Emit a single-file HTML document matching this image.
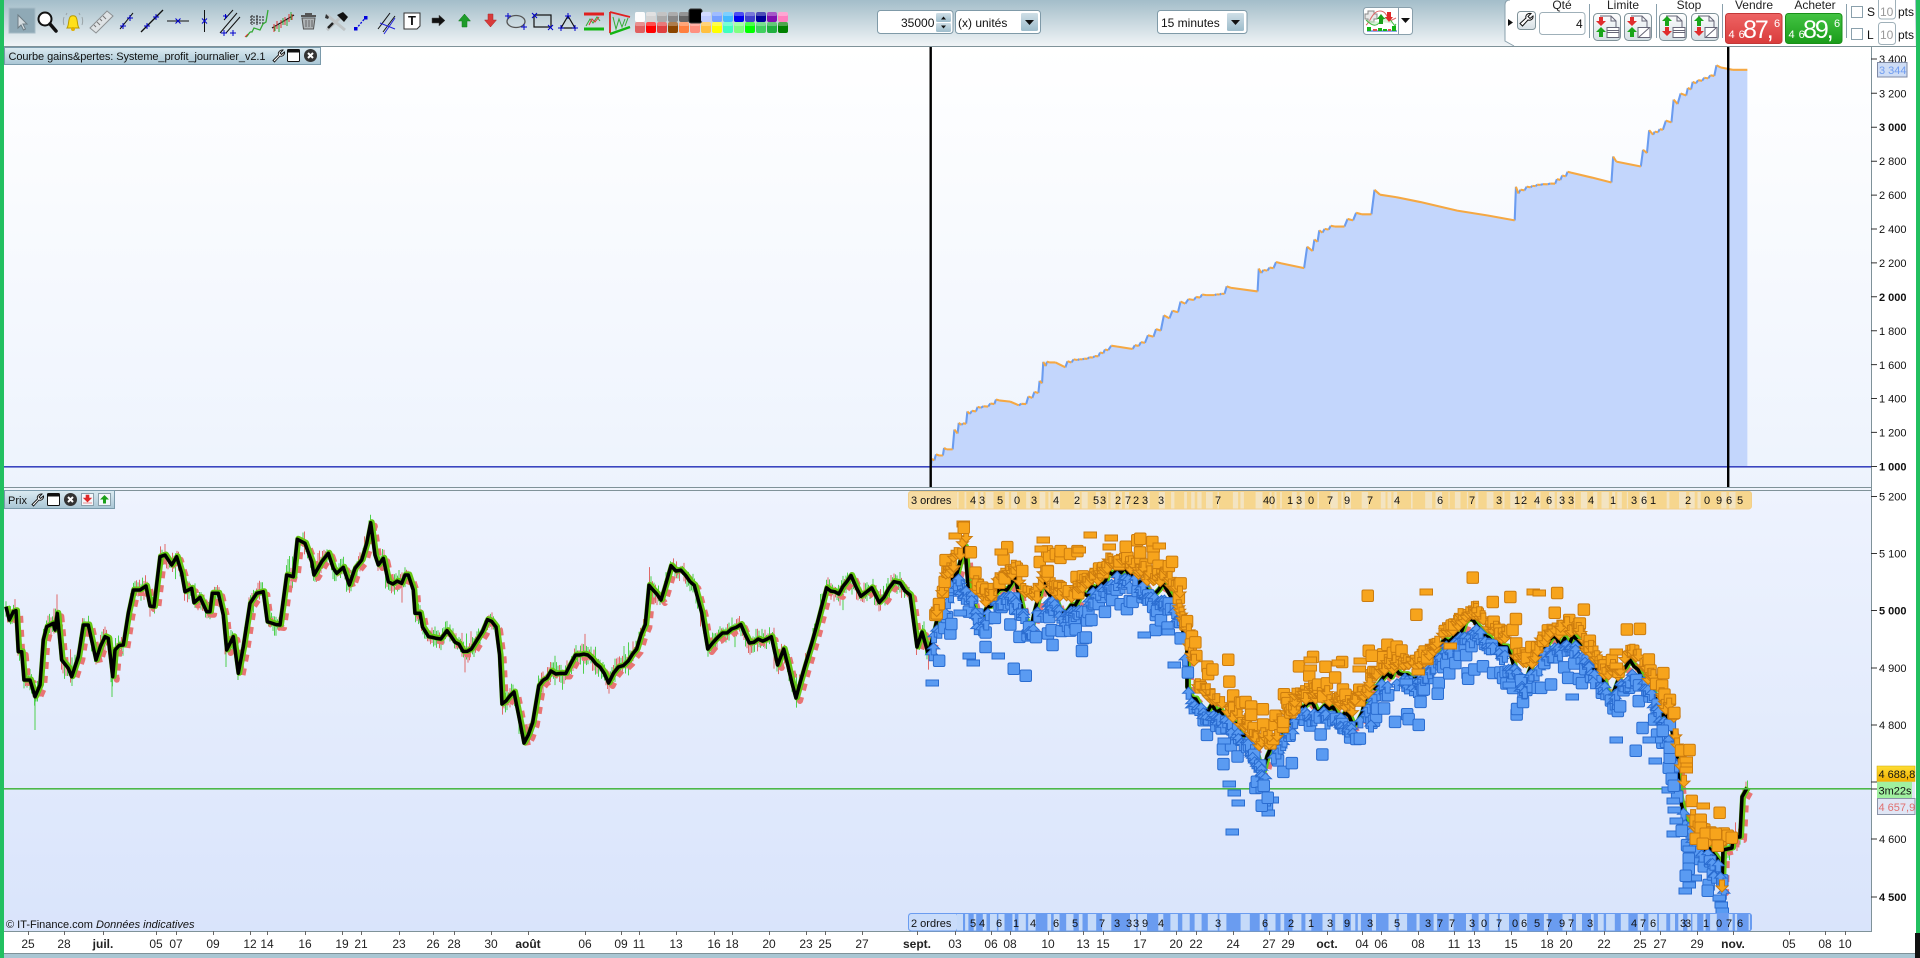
<!DOCTYPE html>
<html lang="fr"><head><meta charset="utf-8"><title>Courbe gains</title>
<style>
html,body{margin:0;padding:0;width:1920px;height:958px;overflow:hidden;background:#fff}
svg{display:block;position:absolute;left:0;top:0}
text{font-family:"Liberation Sans",sans-serif;font-size:11px;fill:#111}
.b{font-weight:bold}
.m{text-anchor:middle}
.ax text{font-size:11px}
.d text{font-size:11px;text-anchor:middle}
.lbl text{font-size:12px;text-anchor:middle;fill:#222}
</style></head><body>
<svg width="1920" height="958" viewBox="0 0 1920 958" xmlns="http://www.w3.org/2000/svg">
<defs>
<linearGradient id="tb" x1="0" y1="0" x2="0" y2="1"><stop offset="0" stop-color="#a3bdc9"/><stop offset="1" stop-color="#f0f4f6"/></linearGradient>
<linearGradient id="p1" x1="0" y1="0" x2="0" y2="1"><stop offset="0" stop-color="#ffffff"/><stop offset="1" stop-color="#edf3fd"/></linearGradient>
<linearGradient id="p2" x1="0" y1="0" x2="0" y2="1"><stop offset="0" stop-color="#eef3fe"/><stop offset="1" stop-color="#d9e4fb"/></linearGradient>
<linearGradient id="tt" x1="0" y1="0" x2="0" y2="1"><stop offset="0" stop-color="#dcebf2"/><stop offset="1" stop-color="#a9c6d5"/></linearGradient>
<linearGradient id="btn" x1="0" y1="0" x2="0" y2="1"><stop offset="0" stop-color="#ffffff"/><stop offset="1" stop-color="#d5dfe4"/></linearGradient>
<linearGradient id="drop" x1="0" y1="0" x2="0" y2="1"><stop offset="0" stop-color="#cfdfe7"/><stop offset="1" stop-color="#9dbccb"/></linearGradient>
<linearGradient id="red" x1="0" y1="0" x2="0" y2="1"><stop offset="0" stop-color="#ee6464"/><stop offset="1" stop-color="#d93c3c"/></linearGradient>
<linearGradient id="grn" x1="0" y1="0" x2="0" y2="1"><stop offset="0" stop-color="#43c443"/><stop offset="1" stop-color="#1a9c1a"/></linearGradient>
<linearGradient id="gold" x1="0" y1="0" x2="0" y2="1"><stop offset="0" stop-color="#ffdd33"/><stop offset="1" stop-color="#f0b000"/></linearGradient>
</defs>

<!-- toolbar -->
<rect x="0" y="0" width="1920" height="46" fill="url(#tb)"/>
<rect x="0" y="46" width="1920" height="1" fill="#7f9299"/>
<rect x="9" y="8" width="26" height="25" fill="#8fa9b6" stroke="#a6bcc7"/>
<path d="M18 15l0 13 3-3 2.500 5 2-1-2.500-5 4 0z" fill="#d5dde1" stroke="#6d7c84"/>
<circle cx="45" cy="19" r="6.500" fill="#fff" stroke="#111" stroke-width="2"/><path d="M50 24l6 7" stroke="#111" stroke-width="3.500" stroke-linecap="round"/>
<path d="M67 28c2-3 1-6 2.500-10 1-3 6-3 7 0 1.500 4 .5 7 2.500 10z" fill="#ffe01a" stroke="#b89a00"/><circle cx="73" cy="29" r="2" fill="#e0b000"/><path d="M64 17c-1 3-1 5 0 8M82 17c1 3 1 5 0 8M67 13l-1 2M79 13l1 2" stroke="#9aa4a8" fill="none"/>
<path d="M90 28l17-17 6 5-17 17z" fill="#dfe3e5" stroke="#8b8f91"/><path d="M94 25l2 2M97 22l3 3M100 19l2 2M103 16l3 3" stroke="#777"/>
<path d="M120 29L133 13M141 37" stroke="#111" fill="none"/><path d="M120 26h6M123 23v6M127 18h6M130 15v6" stroke="#00c" fill="none"/>
<path d="M141 32L163 10" stroke="#111" stroke-width="1.300"/><path d="M144 26h6M147 23v6M153 17h6M156 14v6" stroke="#00c" fill="none"/>
<path d="M167 21h22" stroke="#111"/><path d="M175.500 18.500l5 5M180.500 18.500l-5 5" stroke="#00c"/>
<path d="M204.500 10v22" stroke="#111"/><path d="M202 18.500l5 5M207 18.500l-5 5" stroke="#00c"/>
<path d="M220 33l17-20M226 33l14-16M224 20l9-10" stroke="#111" fill="none"/><path d="M221 35h6M224 32v6M230 35h6M233 32v6M223 18h5M225.500 16v5" stroke="#00c" fill="none" transform="translate(0,-2)"/>
<path d="M250 17h14M250 20h14M250 23h14M252 15v10M257 15v10" stroke="#222" fill="none" stroke-dasharray="2 1"/><path d="M246 37c3-2 3-6 6-5l2-4 6 2 3-6 3-2 2-12" stroke="#33aa33" fill="none" stroke-width="1.300"/><path d="M245 37l3-3" stroke="#d33"/>
<path d="M272 28l22-13" stroke="#111" stroke-width="1.300"/><path d="M274 24v8M277 21v8M281 20v8M285 17v8M289 14v8M292 14v6" stroke="#d33"/><path d="M275 26v5M279 25v7M283 18v7M287 20v6M291 12v8" stroke="#3a3"/>
<path d="M302 18h13l-1.500 11h-10z" fill="#aeb3b5" stroke="#555"/><path d="M301 16h15M305 14h7" stroke="#555" stroke-width="2"/><path d="M306 20v7M309 20v7M312 20v7" stroke="#666"/>
<path d="M327 15l18 15M343 15l-16 15" stroke="#bfc4c6" stroke-width="3"/><path d="M337 15l6-3 5 5-4 5z" fill="#111"/><path d="M326 14l3 3-1 2-3-1z" fill="#333"/><path d="M328 28l5-5" stroke="#222" stroke-width="2.500"/>
<path d="M356 29l10-12" stroke="#00d" stroke-dasharray="2 1.500" stroke-width="1.300"/><rect x="354" y="27" width="3.500" height="3.500" fill="#00d"/><rect x="364" y="16" width="3.500" height="3.500" fill="#00d"/>
<path d="M378 29l12-16M383 32l12-16" stroke="#111" fill="none"/><path d="M380 23l15 6M384 34l11-16" stroke="#22d" fill="none"/>
<path d="M404 13h16v13l-3 3h-13z" fill="#fff" stroke="#333"/><text x="408" y="25" class="b" style="font-size:13px">T</text>
<path d="M432 18h7v-3l6 5.500-6 5.500v-3h-7z" fill="#111" stroke="#555" stroke-width=".5"/>
<path d="M464.500 14l6 7h-3.500v6h-5v-6h-3.500z" fill="#1d9b2a" stroke="#127a1c" stroke-width=".5"/>
<path d="M488 14h5v6h3.500l-6 7-6-7h3.500z" fill="#d83a3a" stroke="#a82a2a" stroke-width=".5"/>
<ellipse cx="516" cy="21.500" rx="9" ry="6" fill="none" stroke="#555" stroke-width="1.300"/><path d="M505 16h6M508 13v6M521 27h6M524 24v6" stroke="#00c" fill="none"/>
<rect x="534" y="15" width="17" height="12" fill="none" stroke="#111" stroke-width="1.200"/><path d="M532 13l5 5M537 13l-5 5M548 25l5 5M553 25l-5 5" stroke="#00c"/>
<path d="M568 16l7 12h-14z" fill="none" stroke="#111" stroke-width="1.200"/><path d="M565 16h6M568 13v6M558 28h6M561 25v6M572 28h6M575 25v6" stroke="#00c" fill="none"/>
<path d="M584 14h20" stroke="#e02020" stroke-width="3"/><path d="M584 29h20" stroke="#12b512" stroke-width="3"/><path d="M586 26l4-7 3 4 4-6 3 4" stroke="#3a3" fill="none"/><path d="M589 25l3-6 3 3 4-5" stroke="#d33" fill="none"/>
<path d="M610 12l20 5M610 12v21" stroke="#e02020" stroke-width="1.800" fill="none"/><path d="M610 34l20-7" stroke="#12b512" stroke-width="2.500"/><path d="M613 17l3 12 3-10 3 8 3-8M628 18l-3 8" stroke="#3a3" fill="none"/>

<g id="pal"></g>

<!-- numeric inputs -->
<rect x="877.500" y="10.500" width="75.500" height="23" rx="3" fill="#fff" stroke="#7f9aa8"/>
<text x="901" y="27" style="font-size:12px">35000</text>
<rect x="936" y="13" width="15" height="9" rx="1.500" fill="url(#drop)"/><rect x="936" y="23" width="15" height="9" rx="1.500" fill="url(#drop)"/>
<path d="M941 19.500l2.500-3 2.500 3zM941 25.500l2.500 3 2.500-3z" fill="#111"/>
<rect x="955.500" y="10.500" width="85" height="23" rx="3" fill="#fff" stroke="#7f9aa8"/>
<text x="958" y="27" style="font-size:12px">(x) unités</text>
<rect x="1021" y="13" width="17" height="18" rx="1.500" fill="url(#drop)"/><path d="M1025 20h9l-4.500 5z" fill="#111"/>
<rect x="1157.500" y="10.500" width="89.500" height="23" rx="3" fill="#fff" stroke="#7f9aa8"/>
<text x="1161" y="27" style="font-size:12px">15 minutes</text>
<rect x="1227" y="13" width="17" height="18" rx="1.500" fill="url(#drop)"/><path d="M1231 20h9l-4.500 5z" fill="#111"/>

<!-- chart type button -->
<rect x="1363.500" y="7.500" width="49" height="27" rx="3" fill="#fff" stroke="#8aa0ac"/>
<path d="M1398.500 8v26" stroke="#8aa0ac"/><path d="M1401 18h9l-4.500 5z" fill="#111"/>
<path d="M1368 11h6v3h3v5h-3v3h-6v-3h-3v-5h3z" fill="#e8e8e8" stroke="#888"/>
<path d="M1366 25c4-2 6-14 14-14s7 11 12 9l4-2" stroke="#d66" fill="none"/><path d="M1366 20c6 6 10 7 14 2s8-6 12 0 3 3 4 2" stroke="#4b4" fill="#bfeabf" fill-opacity=".6"/>
<path d="M1377 19l4-5 4 5h-2v5h-4v-5z" fill="#1aa01a"/><path d="M1387 12h4v5h2l-4 5-4-5h2z" fill="#e02828"/>
<path d="M1367 31h30" stroke="#2255cc"/><rect x="1367" y="27" width="4" height="4" fill="#12b512"/><rect x="1373" y="29" width="4" height="2" fill="#e05050"/><rect x="1378" y="28" width="4" height="3" fill="#12b512"/><rect x="1383" y="29" width="4" height="2" fill="#12b512"/><rect x="1388" y="29" width="3" height="2" fill="#e05050"/><rect x="1392" y="26" width="4" height="5" fill="#12b512"/>

<!-- right order panel -->
<path d="M1505 5q0-5 5-5H1915V46H1514l-9-5z" fill="#fff"/>
<path d="M1510 0q-5 0-5 5v36l9 5" fill="none" stroke="#8aa0ac"/>
<path d="M1508 19l5 3.500-5 3.500z" fill="#111"/>
<rect x="1517.500" y="11.500" width="18" height="18" rx="3" fill="url(#btn)" stroke="#7f9299"/>
<path d="M1531 13.500l-3 3 2 2 3-2.500c.5 2.500-2 5-5 4l-5.500 6-2.500-2.500 6-5.500c-1-3 2-5 5-4.500z" fill="#fff" stroke="#111"/>
<g class="lbl"><text x="1562" y="9">Qté</text><text x="1623" y="9">Limite</text><text x="1689" y="9">Stop</text><text x="1754" y="9">Vendre</text><text x="1815" y="9">Acheter</text></g>
<rect x="1539.500" y="12.500" width="45.500" height="22" rx="3" fill="#fff" stroke="#9fb0b9"/>
<text x="1576" y="28" style="font-size:12px">4</text>
<path d="M1589.500 4v34M1656.500 4v34M1722.500 4v34M1846.500 4v34" stroke="#8aa0ac"/>
<g stroke="#7f9299">
<rect x="1593.500" y="13.500" width="27" height="27" rx="4" fill="url(#btn)"/><rect x="1624.500" y="13.500" width="27" height="27" rx="4" fill="url(#btn)"/>
<rect x="1659.500" y="13.500" width="27" height="27" rx="4" fill="url(#btn)"/><rect x="1691.500" y="13.500" width="27" height="27" rx="4" fill="url(#btn)"/>
</g>
<g fill="none" stroke="#667">
<path d="M1600 16h11l5 5v7M1631 16h11l5 5v7M1666 16h11l5 5v7M1698 16h11l5 5v7"/><path d="M1611 16v5h5M1642 16v5h5M1677 16v5h5M1709 16v5h5"/>
</g>
<g fill="#fff" stroke="#667">
<rect x="1607" y="27.500" width="12" height="10"/><rect x="1638" y="27.500" width="12" height="10"/><rect x="1673" y="27.500" width="12" height="10"/><rect x="1705" y="27.500" width="12" height="10"/>
</g>
<path d="M1607 32.500h12M1673 32.500h12M1607 30.500h12M1673 30.500h12" stroke="#667" fill="none"/>
<path d="M1639 37l10-9M1706 37l10-9" stroke="#667"/>
<g fill="#e02d2d"><path d="M1599 17h4v4h3l-5 5-5-5h3z"/><path d="M1630 17h4v4h3l-5 5-5-5h3z"/><path d="M1665 27h4v4h3l-5 5-5-5h3z"/><path d="M1697 27h4v4h3l-5 5-5-5h3z"/></g>
<g fill="#1aa51a"><path d="M1601 27l5 5h-3v5h-4v-5h-3z"/><path d="M1632 27l5 5h-3v5h-4v-5h-3z"/><path d="M1667 16l5 5h-3v5h-4v-5h-3z"/><path d="M1699 16l5 5h-3v5h-4v-5h-3z"/></g>
<rect x="1725.500" y="13.500" width="56.500" height="30" rx="3" fill="url(#red)" stroke="#c23838"/>
<rect x="1785.500" y="13.500" width="56.500" height="30" rx="3" fill="url(#grn)" stroke="#199019"/>
<g>
<text x="1728.500" y="38" style="fill:#fff;font-size:11px;letter-spacing:.5px">4 6</text><text x="1743" y="38" style="fill:#fff;font-size:25px;letter-spacing:-2px">87,</text><text x="1774" y="27" style="fill:#fff;font-size:11px">6</text>
<text x="1788.500" y="38" style="fill:#fff;font-size:11px;letter-spacing:.5px">4 6</text><text x="1803" y="38" style="fill:#fff;font-size:25px;letter-spacing:-2px">89,</text><text x="1834" y="27" style="fill:#fff;font-size:11px">6</text>
</g>
<rect x="1851.500" y="6.500" width="11" height="11" fill="#fff" stroke="#8aa0ac"/><rect x="1851.500" y="28.500" width="11" height="11" fill="#fff" stroke="#8aa0ac"/>
<text x="1867" y="16" style="font-size:12px">S</text><text x="1867" y="39" style="font-size:12px">L</text>
<rect x="1878.500" y="-3" width="17" height="22" rx="3" fill="#fff" stroke="#9fb0b9"/><rect x="1878.500" y="22.500" width="17" height="22" rx="3" fill="#fff" stroke="#9fb0b9"/>
<text x="1880" y="16" style="font-size:12px;fill:#999">10</text><text x="1880" y="39" style="font-size:12px;fill:#999">10</text>
<text x="1898" y="16" style="font-size:12px">pts</text><text x="1898" y="39" style="font-size:12px">pts</text>

<!-- panes -->
<rect x="4" y="47" width="1867" height="440" fill="url(#p1)"/>
<rect x="4" y="488" width="1867" height="2" fill="#f0f4fc"/>
<rect x="4" y="491" width="1867" height="440" fill="url(#p2)"/>
<rect x="1872" y="47" width="43" height="885" fill="#fff"/>
<rect x="4" y="932" width="1911" height="21" fill="#fff"/>
<rect x="4" y="487" width="1868" height="1" fill="#7f9299"/>
<rect x="4" y="490" width="1868" height="1" fill="#7f9299"/>
<rect x="4" y="931" width="1868" height="1" fill="#7f9299"/>
<rect x="1871" y="47" width="1" height="885" fill="#7f9299"/>
<rect x="0" y="953" width="1920" height="1" fill="#7f9299"/>
<rect x="0" y="954" width="1920" height="4" fill="#a9c6d3"/>
<rect x="0" y="0" width="4" height="958" fill="#22c060"/>
<rect x="1916" y="0" width="4" height="933" fill="#22c060"/>
<rect x="1915" y="933" width="5" height="25" fill="#111"/>

<!-- equity -->
<g transform="scale(1.2245)">
<path id="eqf" fill="#c3d6fc"/>
<path id="eq" d="M760 381L763 376L767 372L770 372L773 367L778 367L782 354L785 347L789 346L792 338L797 336L801 333L807 332L812 330L816 327L825 328L832 331L838 330L843 325L848 321L851 313L854 299L857 296L862 296L870 300L875 296L880 294L888 293L897 291L905 286L912 283L925 285L935 280L942 275L948 270L955 260L962 255L968 248L975 245L985 241L992 241L1000 240L1005 235L1027 238L1030 223L1040 219L1046 215L1065 219L1072 205L1080 190L1090 185L1098 185L1105 180L1112 175L1120 175L1127 159L1140 161L1160 165L1190 172L1215 176L1237 180L1240 158L1250 153L1258 151L1270 150L1283 141L1300 145L1316 149L1320 132L1340 136L1345 125L1350 110L1358 106L1365 100L1370 85L1377 78L1385 68L1395 64L1400 62L1405 55L1415 57L1427 57" fill="none" stroke="#6a9cf0" stroke-width="1.700"/>
<path id="eqo" fill="none" stroke="#f5a843" stroke-width="1.700"/>
</g>
<rect x="4" y="466" width="1867" height="1.600" fill="#3a45c0"/>
<rect x="929.500" y="47" width="2.400" height="440" fill="#000"/>
<rect x="1727" y="47" width="2.400" height="440" fill="#000"/>

<!-- price noise + line -->
<g id="noise"></g>
<g fill="none" stroke-linejoin="round">
<path id="pl2" transform="translate(4,3)" stroke="#e87474" stroke-width="6" stroke-dasharray="7 7"/>
<path id="pl3" transform="translate(1,-.5)" stroke="#66c814" stroke-width="6"/>
<path id="pl" stroke="#000" stroke-width="3.500" d="M6 606.700L9.300 620L13.300 611.700L16 610.700L18.300 651.700L21.700 651.700L24 680L30 680L35 696.700L40 685L43.300 640L46.700 626.700L53.300 623.300L55 630L57.300 613.300L61.700 660L68.300 668.300L71.700 676.700L78.300 656.700L83.300 625L88.300 625L96 660L105 636.700L108.300 638.300L112.700 676.700L115 650L123.300 645L128.300 613.300L133.300 590L140 590L146 586L150 606L154 606.700L160 556.700L165 555L171.700 565L176.700 556.700L181.700 573.300L185 591.700L191.700 588.300L194 602.700L200 597.300L206.700 611.700L210 611.700L212.300 593.300L218.300 593.300L223.300 615L226.700 650L233.300 636.700L238.300 673.300L243.300 646.700L250 603.300L256.700 593.300L263.300 591.700L267.300 621.700L280 625L286.700 575L293.300 576.700L297.300 539.300L305 543.300L311.700 561.700L314 575L321.700 561.700L328.300 553.300L333.300 568.300L336.700 573.300L343.300 567.300L349.300 585L355 568.300L361.700 560L366.700 543.300L370.700 522.700L375 555L378.300 565L383.300 558.300L388.300 581.700L401.700 583.300L405 575L408.300 575L413.300 590L415 613.300L420 613.300L422.500 627L428.600 636.700L440.800 639L447 630.600L463 651.400L471.400 649L477.600 639L487.400 619.600L496 627L499.600 655L502 704L514 692L524 743L532.700 722.400L538.800 685.700L551 671L565.700 673.500L575.500 655L587.800 655L600 667L608.600 683L618.400 667L628.200 661L636.700 649L645.300 624.500L649 585.300L661 600L671 565.700L685.700 575.500L694.300 585.300L701.600 612.300L707.800 649L722.500 633L740.800 624.500L749.400 643L771.400 636.700L777.600 665L783.700 649L796 698L804.500 667.400L811.800 643L826.500 587.800L838.800 594L851 575.500L860.800 596.300L871.800 587.800L879.200 602.500L893.900 581.600L900 583L910 595L917 647L922 632L928 653L933 637L943 587L957 573L965 547L968 587L977 620L987 607L1015 577L1023 613L1030 633L1043 580L1063 613L1083 593L1100 583L1117 570L1133 575L1150 595L1163 583L1177 613L1187 647L1187 687L1200 707L1220 710L1233 723L1245 735L1255 750L1262 775L1272 745L1285 722L1300 707L1308 703L1317 713L1333 707L1357 723L1367 693L1395 668L1415 680L1440 647L1473 620L1493 643L1507 647L1520 683L1527 677L1548 643L1577 640L1592 670L1612 697L1630 660L1650 687L1660 715L1667 715L1677 757L1680 798L1685 820L1700 852L1712 852L1718 860L1722 890L1723 850L1732 848L1733 837L1740 837L1742 797L1747 788"/>
</g>
<rect x="4" y="788" width="1867" height="1.600" fill="#4cb848"/>
<g id="marks"></g>

<!-- order bars -->
<g id="bars"></g>
<rect x="908.500" y="491.500" width="843" height="17.500" rx="3" fill="none" stroke="#f3cf8a"/>
<rect x="908.500" y="913.500" width="843" height="17.500" rx="3" fill="none" stroke="#6a9cf0"/>
<text x="911" y="504">3 ordres</text>
<text x="911" y="927">2 ordres</text>
<g class="d">
<text x="973" y="504">4</text><text x="982" y="504">3</text><text x="1000" y="504">5</text><text x="1017" y="504">0</text><text x="1034" y="504">3</text><text x="1056" y="504">4</text><text x="1077" y="504">2</text><text x="1096" y="504">5</text><text x="1103" y="504">3</text><text x="1118" y="504">2</text><text x="1128" y="504">7</text><text x="1136" y="504">2</text><text x="1145" y="504">3</text><text x="1161" y="504">3</text><text x="1218" y="504">7</text><text x="1266" y="504">4</text><text x="1272" y="504">0</text><text x="1290" y="504">1</text><text x="1299" y="504">3</text><text x="1311" y="504">0</text><text x="1330" y="504">7</text><text x="1347" y="504">9</text><text x="1370" y="504">7</text><text x="1397" y="504">4</text><text x="1440" y="504">6</text><text x="1472" y="504">7</text><text x="1499" y="504">3</text><text x="1517" y="504">1</text><text x="1524" y="504">2</text><text x="1537" y="504">4</text><text x="1549" y="504">6</text><text x="1562" y="504">3</text><text x="1571" y="504">3</text><text x="1591" y="504">4</text><text x="1613" y="504">1</text><text x="1634" y="504">3</text><text x="1644" y="504">6</text><text x="1653" y="504">1</text><text x="1688" y="504">2</text><text x="1707" y="504">0</text><text x="1719" y="504">9</text><text x="1729" y="504">6</text><text x="1740" y="504">5</text>
<text x="973" y="927">5</text><text x="982" y="927">4</text><text x="999" y="927">6</text><text x="1016" y="927">1</text><text x="1033" y="927">4</text><text x="1056" y="927">6</text><text x="1075" y="927">5</text><text x="1102" y="927">7</text><text x="1117" y="927">3</text><text x="1129" y="927">3</text><text x="1136" y="927">3</text><text x="1145" y="927">9</text><text x="1161" y="927">4</text><text x="1218" y="927">3</text><text x="1265" y="927">6</text><text x="1291" y="927">2</text><text x="1311" y="927">1</text><text x="1330" y="927">3</text><text x="1347" y="927">9</text><text x="1370" y="927">3</text><text x="1397" y="927">5</text><text x="1428" y="927">3</text><text x="1440" y="927">7</text><text x="1452" y="927">7</text><text x="1472" y="927">3</text><text x="1484" y="927">0</text><text x="1499" y="927">7</text><text x="1515" y="927">0</text><text x="1524" y="927">6</text><text x="1537" y="927">5</text><text x="1549" y="927">7</text><text x="1562" y="927">9</text><text x="1571" y="927">7</text><text x="1590" y="927">3</text><text x="1634" y="927">4</text><text x="1643" y="927">7</text><text x="1653" y="927">6</text><text x="1683" y="927">3</text><text x="1688" y="927">3</text><text x="1706" y="927">1</text><text x="1719" y="927">0</text><text x="1729" y="927">7</text><text x="1740" y="927">6</text>
</g>

<!-- title boxes -->
<rect x="4.500" y="47.500" width="316" height="17" fill="url(#tt)" stroke="#7a9aab"/>
<text x="8.500" y="60" textLength="257" lengthAdjust="spacing">Courbe gains&amp;pertes: Systeme_profit_journalier_v2.1</text>
<path d="M283 50l-3 3 1.500 1.500 3-2.500c.5 2.500-2 5-4.500 4l-5.500 6-1.500-1.500 5.500-5.500c-1-3 2-5.500 4.500-5z" fill="#fff" stroke="#111" stroke-width=".9"/>
<rect x="287.500" y="49.500" width="12" height="12" rx="1" fill="#fff" stroke="#111"/><rect x="287.500" y="49.500" width="12" height="3" fill="#111"/>
<circle cx="310.500" cy="55.500" r="6.500" fill="#333"/><path d="M308 53l5 5M313 53l-5 5" stroke="#fff" stroke-width="2"/>
<rect x="4.500" y="490.500" width="110" height="18" fill="url(#tt)" stroke="#7a9aab"/>
<text x="8" y="504">Prix</text>
<path d="M42 494l-3 3 1.500 1.500 3-2.500c.5 2.500-2 5-4.500 4l-5.500 6-1.500-1.500 5.500-5.500c-1-3 2-5.500 4.500-5z" fill="#fff" stroke="#111" stroke-width=".9"/>
<rect x="47.500" y="493.500" width="12" height="12" rx="1" fill="#fff" stroke="#111"/><rect x="47.500" y="493.500" width="12" height="3" fill="#111"/>
<circle cx="70.500" cy="499.500" r="6.500" fill="#333"/><path d="M68 497l5 5M73 497l-5 5" stroke="#fff" stroke-width="2"/>
<rect x="81.500" y="493.500" width="12" height="12" fill="#f4f7fb" stroke="#8aa0ac"/><path d="M86 495h3v3h2.500l-4 4-4-4h2.500zM83 503h9" stroke="#e02828" fill="#e02828" stroke-width=".6"/>
<rect x="98.500" y="493.500" width="12" height="12" fill="#f4f7fb" stroke="#8aa0ac"/><path d="M104.500 495l4.500 4.500h-3v4h-3v-4h-3z" fill="#1aa01a"/>
<text x="6" y="928" style="font-size:11px">© IT-Finance.com <tspan style="font-style:italic">Données indicatives</tspan></text>

<!-- axis labels -->
<g class="ax" id="yaxis" style="fill:#111">
<path d="M1871 59h6M1871 93.300h6M1871 127.300h6M1871 161.200h6M1871 195.100h6M1871 229h6M1871 262.900h6M1871 296.800h6M1871 330.700h6M1871 364.600h6M1871 398.500h6M1871 432.400h6M1871 466.500h6M1871 496.500h6M1871 553.500h6M1871 610.500h6M1871 668h6M1871 725h6M1871 782h6M1871 839h6M1871 897h6M1871 789h6" stroke="#333" fill="none"/>
<text x="1879" y="63">3 400</text><text x="1879" y="97.500">3 200</text><text x="1879" y="131" class="b">3 000</text><text x="1879" y="165">2 800</text><text x="1879" y="199">2 600</text><text x="1879" y="233">2 400</text><text x="1879" y="267">2 200</text><text x="1879" y="301" class="b">2 000</text><text x="1879" y="335">1 800</text><text x="1879" y="369">1 600</text><text x="1879" y="402.500">1 400</text><text x="1879" y="436.500">1 200</text><text x="1879" y="470.500" class="b">1 000</text>
<text x="1879" y="500.500">5 200</text><text x="1879" y="557.500">5 100</text><text x="1879" y="614.500" class="b">5 000</text><text x="1879" y="672">4 900</text><text x="1879" y="729">4 800</text><text x="1879" y="843">4 600</text><text x="1879" y="901" class="b">4 500</text>
</g>
<rect x="1877.500" y="62.500" width="29.500" height="14.500" fill="#cfddf5" stroke="#7f8aa5"/>
<text x="1879" y="74" style="fill:#6f9cf0">3 344</text>
<rect x="1877" y="766" width="38" height="15.500" fill="url(#gold)" stroke="#c9a400" stroke-width=".5"/>
<text x="1878.500" y="778" style="fill:#111">4 688,8</text>
<rect x="1877" y="782" width="38" height="16" fill="#dfe6f4"/>
<rect x="1877" y="782" width="35" height="16" fill="#a0f0a0"/>
<text x="1878.500" y="794.500">3m22s</text>
<rect x="1877.500" y="798.500" width="37.500" height="16" fill="#e0e6f5" stroke="#8a93a8"/>
<text x="1878.500" y="811" style="fill:#e07070">4 657,9</text>
<g id="xt" stroke="#666"></g>
<g id="xa">
<g class="lbl"><text x="28" y="948">25</text><text x="64" y="948">28</text><text x="103" y="948" class="b">juil.</text><text x="156" y="948">05</text><text x="176" y="948">07</text><text x="213" y="948">09</text><text x="250" y="948">12</text><text x="267" y="948">14</text><text x="305" y="948">16</text><text x="342" y="948">19</text><text x="361" y="948">21</text><text x="399" y="948">23</text><text x="433" y="948">26</text><text x="454" y="948">28</text><text x="491" y="948">30</text><text x="528" y="948" class="b">août</text><text x="585" y="948">06</text><text x="621" y="948">09</text><text x="639" y="948">11</text><text x="676" y="948">13</text><text x="714" y="948">16</text><text x="732" y="948">18</text><text x="769" y="948">20</text><text x="806" y="948">23</text><text x="825" y="948">25</text><text x="862" y="948">27</text><text x="917" y="948" class="b">sept.</text><text x="955" y="948">03</text><text x="991" y="948">06</text><text x="1010" y="948">08</text><text x="1048" y="948">10</text><text x="1083" y="948">13</text><text x="1103" y="948">15</text><text x="1140" y="948">17</text><text x="1176" y="948">20</text><text x="1196" y="948">22</text><text x="1233" y="948">24</text><text x="1269" y="948">27</text><text x="1288" y="948">29</text><text x="1327" y="948" class="b">oct.</text><text x="1362" y="948">04</text><text x="1381" y="948">06</text><text x="1418" y="948">08</text><text x="1454" y="948">11</text><text x="1474" y="948">13</text><text x="1511" y="948">15</text><text x="1547" y="948">18</text><text x="1566" y="948">20</text><text x="1604" y="948">22</text><text x="1640" y="948">25</text><text x="1660" y="948">27</text><text x="1697" y="948">29</text><text x="1733" y="948" class="b">nov.</text><text x="1789" y="948">05</text><text x="1825" y="948">08</text><text x="1845" y="948">10</text></g>
</g>
</svg>
<script>
(function(){
var s=12345;
function r(){s=(s*1664525+1013904223)%4294967296;return s/4294967296}
function E(id,h){document.getElementById(id).innerHTML=h}
function $(id){return document.getElementById(id)}
// palette
var top=['#fdfdfd','#d4d4d4','#aaaaaa','#888888','#666666','#000000','#c0ccff','#77a0ff','#44bbff','#0000ee','#4040cc','#000099','#8010b0','#ff80c0'];
var bot=['#e06060','#ff0000','#e04040','#8b4500','#ff8040','#ff9080','#ffc040','#ffff00','#40ffc0','#80ff80','#00ff00','#40d060','#20b040','#008000'];
var h='',i;for(i=0;i<14;i++){var x=635+i*11;
h+='<rect x="'+x+'" y="22" width="10" height="11" rx="2" fill="'+bot[i]+'"/><rect x="'+x+'" y="22" width="10" height="4" rx="1.500" fill="#fff" opacity=".3"/>';
if(i==5)h+='<rect x="'+(x-1)+'" y="9" width="13" height="14" rx="2" fill="#000" stroke="#333"/>';
else h+='<rect x="'+x+'" y="12" width="10" height="10" rx="2" fill="'+top[i]+'"/><rect x="'+x+'" y="12" width="10" height="4" rx="1.500" fill="#fff" opacity=".3"/>';}
E('pal',h);
// price line with fine-grained jitter
var n=$('pl').getAttribute('d').match(/[\d.]+/g).map(Number),P=[];
for(i=0;i<n.length;i+=2){
 if(i>0){var x0=n[i-2],y0=n[i-1],x1=n[i],y1=n[i+1],dx=x1-x0,k=Math.floor(dx/4);
  if(x0>5&&x1<1725){for(var j=1;j<k;j++){var t=j/k,amp=x0>930?6:2.2;P.push([x0+dx*t,y0+(y1-y0)*t+(r()-.5)*2*amp])}}}
 P.push([n[i],n[i+1]]);
}
var d='M'+P.map(function(p){return p[0].toFixed(1)+' '+p[1].toFixed(1)}).join('L');
$('pl').setAttribute('d',d);$('pl3').setAttribute('d',d);$('pl2').setAttribute('d',d);
function f(x){for(var i=1;i<P.length;i++)if(x<=P[i][0]){var a=P[i-1],b=P[i];if(b[0]==a[0])return b[1];return a[1]+(b[1]-a[1])*(x-a[0])/(b[0]-a[0])}return P[P.length-1][1]}
// equity stepped
var e=$('eq').getAttribute('d').match(/[\d.]+/g).map(Number),Q=[[e[0],e[1]]],bl='',o='';
function seg(a,b,c,dd){return 'M'+a.toFixed(1)+' '+b.toFixed(1)+'L'+c.toFixed(1)+' '+dd.toFixed(1)}
for(i=2;i<e.length;i+=2){var ax=e[i-2],ay=e[i-1],bx=e[i],by=e[i+1],ddx=bx-ax,ddy=by-ay;
 if(ddy<-.5&&ddx>2.5){var m=Math.max(1,Math.round(ddx/5)),sx=ddx/m,sy=ddy/m;
  for(var q=0;q<m;q++){var cx=ax+sx*q,cy=ay+sy*q,tx=cx+sx*.35,ty=cy+sy*1.25,ex=cx+sx,ey=cy+sy;
   bl+=seg(cx,cy,tx,ty);o+=seg(tx,ty,ex,ey);Q.push([tx,ty],[ex,ey]);}
 } else if(ddy<-.5){bl+=seg(ax,ay,bx,by);Q.push([bx,by]);}
 else {o+=seg(ax,ay,bx,by);Q.push([bx,by]);}
}
$('eq').setAttribute('d',bl);$('eqo').setAttribute('d',o);
$('eqf').setAttribute('d','M'+Q.map(function(p){return p[0].toFixed(1)+' '+p[1].toFixed(1)}).join('L')+'L1427 381Z');
// candles
h='';for(x=6;x<1748;x+=1.5){if(x>930&&x<1722)continue;var y=f(x),a=3+r()*9,b=3+r()*9;if(r()<.06)a+=r()*14;if(r()<.06)b+=r()*14;
h+='<path d="M'+x+' '+(y-a)+'V'+(y+b)+'" stroke="'+(r()<.6?'#4fd04f':'#e06a6a')+'"/>'}
h+='<path d="M35 690V730M238 670V680M112 670V697M226 650V667" stroke="#4fd04f"/>';
E('noise',h);
// marks
var OF='#f7a41c',OS='#cc7c0e',BF='#5a9bf2',BS='#2a6cd0';
function sq(x,y,c,t,w){w=w||11.500;return '<rect x="'+x.toFixed(1)+'" y="'+y.toFixed(1)+'" width="'+w+'" height="'+w+'" rx="1.500" fill="'+c+'" stroke="'+t+'"/>'}
function fl(x,y,c,t){return '<rect x="'+x+'" y="'+y+'" width="12.500" height="6" fill="'+c+'" stroke="'+t+'"/>'}
function dn(x,y){return '<path d="M'+(x-2.500).toFixed(1)+' '+y.toFixed(1)+'h5v6h3.500l-6 6-6-6h3.500z" fill="'+OF+'" stroke="'+OS+'"/>'}
function up(x,y){return '<path d="M'+x.toFixed(1)+' '+y.toFixed(1)+'l6 6h-3.500v6h-5v-6h-3.500z" fill="'+BF+'" stroke="'+BS+'"/>'}
var B='',O='';
for(x=930;x<1722;x+=1.3){y=f(x);
 var yy=Math.min(y,(f(x-8)+f(x+8))/2);
 var yb=Math.max(y,(f(x-8)+f(x+8))/2);
 var amp2=24+26*Math.abs(Math.sin(x/27));
 if(r()<.6)B+=up(x+r()*3,yb-3+r()*10);
 if(r()<.32)B+=sq(x-3+r()*4,yb+1+r()*r()*amp2*1.3,BF,BS);
 if(r()<.6)O+=dn(x+r()*3,yy-12-r()*10);
 if(r()<.32)O+=sq(x-4+r()*4,yy-14-r()*r()*amp2*1.3,OF,OS);
}
var fo=[[957,521],[949,533],[995,549],[1037,537],[1035,546],[1084,532],[1105,535],[1103,544],[1073,547],[1147,546],[1153,543],[1304,657],[1304,665],[1332,660],[1354,658],[1353,666],[1420,589],[1527,589],[1533,590],[1444,643],[1412,669],[1610,649],[1610,663],[1697,803],[1680,757],[1680,767]];
var so=[[958,522],[1120,541],[1363,645],[1366,650],[1549,607],[1362,590],[1695,814],[1695,822],[1690,833],[1700,828],[1710,828],[1722,830],[1726,832],[1697,838],[1712,840]];
var fb=[[926,680],[954,610],[992,653],[1138,632],[1162,629],[967,660],[963,653],[1168,662],[1218,738],[1223,781],[1226,829],[1256,787],[1266,797],[1400,679],[1503,682],[1566,694],[1610,737],[1650,737],[1667,831],[1683,846],[1689,875],[1679,888],[1683,882],[1713,895],[1715,902],[1716,908],[1643,737],[1649,758],[1662,787],[1667,798],[1668,807],[1670,818],[1228,790],[1232,800],[1262,810],[1258,800]];
var sb=[[1008,663],[1020,670],[1432,688],[1657,725],[1630,745],[1676,825],[1683,853],[1683,863],[1680,870],[1702,885],[1663,762],[1666,773],[1668,780],[1664,752],[1664,742],[1256,800],[1262,792],[1258,780]];
for(i=0;i<fb.length;i++)B+=fl(fb[i][0],fb[i][1],BF,BS);
for(i=0;i<sb.length;i++)B+=sq(sb[i][0],sb[i][1],BF,BS);
for(i=0;i<fo.length;i++)O+=fl(fo[i][0],fo[i][1],OF,OS);
for(i=0;i<so.length;i++)O+=sq(so[i][0],so[i][1],OF,OS);
O+=dn(1180,586)+dn(1722,880);B+=up(1371,720);
E('marks',B+O);
// bars
h='<rect x="908" y="491" width="844" height="18" rx="3" fill="#f6d68e"/><rect x="908" y="491" width="49" height="18" rx="3" fill="#f6dca3"/>';
x=957;while(x<1750){var w=1+r()*7;if(x+w>1750)w=1750-x;h+='<rect x="'+x.toFixed(1)+'" y="492" width="'+w.toFixed(1)+'" height="16.500" fill="#f3e4c2"/>';x+=w+2+r()*r()*24}
h+='<rect x="908" y="913" width="844" height="18" rx="3" fill="#6a9cf0"/><rect x="908" y="913" width="49" height="18" rx="3" fill="#c9dcfa"/>';
x=957;while(x<1750){w=2+r()*8;if(x+w>1750)w=1750-x;h+='<rect x="'+x.toFixed(1)+'" y="914" width="'+w.toFixed(1)+'" height="16.500" fill="#c5daf9"/>';x+=w+1.500+r()*r()*20}
E('bars',h);
// x ticks
var tt=document.querySelectorAll('#xa text'),qq='';for(i=0;i<tt.length;i++){var xx=+tt[i].getAttribute('x');qq+='<path d="M'+(xx+.5)+' 931v4"/>'}
E('xt',qq);
})();
</script>
</body></html>
